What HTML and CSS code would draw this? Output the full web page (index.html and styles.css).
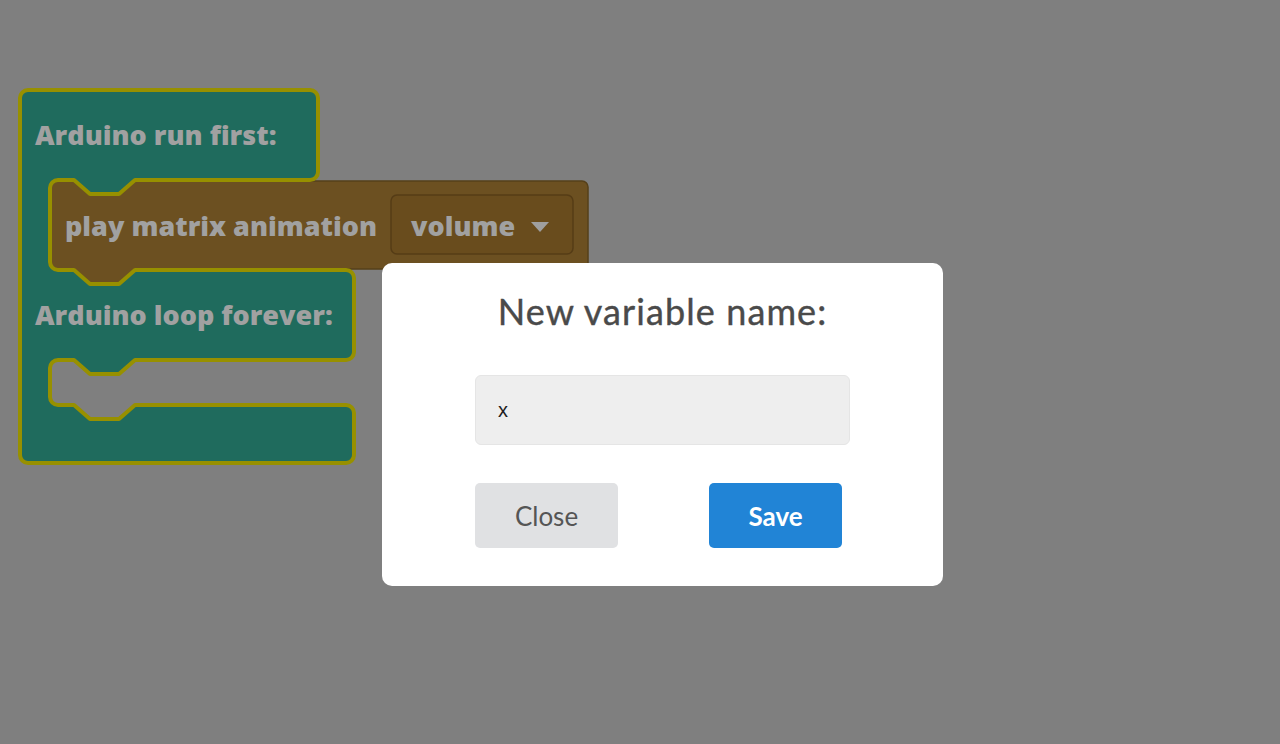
FILE: index.html
```html
<!DOCTYPE html>
<html lang="en">
<head>
<meta charset="utf-8">
<title>New variable</title>
<link rel="stylesheet" href="styles.css">
</head>
<body>
<div class="workspace">
  <svg class="blocks" width="1280" height="744" viewBox="0 0 1280 744" xmlns="http://www.w3.org/2000/svg">
    <path class="teal-fill" d="M 20,98 A 8,8 0 0 1 28,90 H 310 A 8,8 0 0 1 318,98 V 172 A 8,8 0 0 1 310,180 H 135 L 119,194 H 90 L 74,180 H 58 A 8,8 0 0 0 50,188 V 262 A 8,8 0 0 0 58,270 H 74 L 90,284 H 119 L 135,270 H 346 A 8,8 0 0 1 354,278 V 352 A 8,8 0 0 1 346,360 H 135 L 119,374 H 90 L 74,360 H 58 A 8,8 0 0 0 50,368 V 397 A 8,8 0 0 0 58,405 H 74 L 90,419 H 119 L 135,405 H 346 A 8,8 0 0 1 354,413 V 455 A 8,8 0 0 1 346,463 H 28 A 8,8 0 0 1 20,455 Z"/>
    <path class="brown" d="M 50,189 A 8,8 0 0 1 58,181 H 74 L 90,195 H 119 L 135,181 H 582 A 6,6 0 0 1 588,187 V 263 A 6,6 0 0 1 582,269 H 135 L 119,283 H 90 L 74,269 H 58 A 8,8 0 0 1 50,261 Z"/>
    <path class="teal-stroke" d="M 20,98 A 8,8 0 0 1 28,90 H 310 A 8,8 0 0 1 318,98 V 172 A 8,8 0 0 1 310,180 H 135 L 119,194 H 90 L 74,180 H 58 A 8,8 0 0 0 50,188 V 262 A 8,8 0 0 0 58,270 H 74 L 90,284 H 119 L 135,270 H 346 A 8,8 0 0 1 354,278 V 352 A 8,8 0 0 1 346,360 H 135 L 119,374 H 90 L 74,360 H 58 A 8,8 0 0 0 50,368 V 397 A 8,8 0 0 0 58,405 H 74 L 90,419 H 119 L 135,405 H 346 A 8,8 0 0 1 354,413 V 455 A 8,8 0 0 1 346,463 H 28 A 8,8 0 0 1 20,455 Z"/>
    <rect class="field" x="391" y="195" width="182" height="59" rx="6" ry="6"/>
    <polygon class="caret" points="531,222 549,222 540,232"/>
    <text class="label" x="35" y="145">Arduino run first:</text>
    <text class="label" x="65" y="236">play matrix animation</text>
    <text class="label" x="411" y="236">volume</text>
    <text class="label" x="35" y="325">Arduino loop forever:</text>
  </svg>
</div>

<div class="overlay">
  <div class="modal">
    <h2 class="modal-title">New variable name:</h2>
    <input class="name-input" type="text" value="x">
    <div class="actions">
      <button class="btn btn-close" type="button">Close</button>
      <button class="btn btn-save" type="button">Save</button>
    </div>
  </div>
</div>
</body>
</html>
```

FILE: styles.css
```css
html, body {
  margin: 0;
  padding: 0;
  width: 100%;
  height: 100%;
  overflow: hidden;
}

body {
  background: #7f7f7f;
  font-family: Lato, "Noto Sans", sans-serif;
}

.workspace {
  position: relative;
  width: 1280px;
  height: 744px;
  background: #7f7f7f;
}

.blocks {
  display: block;
}

.teal-fill {
  fill: #1f6b5d;
  stroke: none;
}

.teal-stroke {
  fill: none;
  stroke: #979000;
  stroke-width: 4;
  stroke-linejoin: round;
}

.brown {
  fill: #6c5021;
  stroke: #56401a;
  stroke-width: 1.5;
}

.field {
  fill: #694c1d;
  stroke: #553c16;
  stroke-width: 1.5;
}

.caret {
  fill: #9f9f9f;
}

.label {
  font-family: "Open Sans", Lato, sans-serif;
  font-weight: 800;
  font-size: 27px;
  fill: #a1a1a1;
}

.overlay {
  position: fixed;
  inset: 0;
  display: flex;
  justify-content: flex-start;
  align-items: flex-start;
  padding: 263px 0 0 382px;
  box-sizing: border-box;
}

.modal {
  width: 561px;
  height: 323px;
  background: #ffffff;
  border-radius: 10px;
  box-sizing: border-box;
  display: flex;
  flex-direction: column;
  align-items: center;
  padding-top: 27px;
}

.modal-title {
  margin: 0;
  font-family: Lato, "Noto Sans", sans-serif;
  font-weight: 400;
  font-size: 36px;
  line-height: 42px;
  color: #4a4a4a;
  letter-spacing: 1.1px;
  -webkit-text-stroke: 0.4px #4a4a4a;
}

.name-input {
  margin-top: 43px;
  width: 375px;
  height: 70px;
  box-sizing: border-box;
  border: 1px solid #e5e5e5;
  border-radius: 6px;
  background: #eeeeee;
  padding: 0 0 0 22px;
  font-family: "Liberation Sans", Arial, sans-serif;
  font-size: 20px;
  color: #1e1e1e;
  outline: none;
}

.actions {
  margin-top: 38px;
  width: 375px;
  display: flex;
  justify-content: space-between;
  padding-right: 8px;
  box-sizing: border-box;
}

.btn {
  height: 65px;
  border: none;
  border-radius: 5px;
  font-family: Lato, "Noto Sans", sans-serif;
  font-size: 26px;
  cursor: pointer;
}

.btn-close {
  width: 143px;
  background: #e0e1e3;
  color: #555555;
  font-weight: 400;
}

.btn-save {
  width: 133px;
  background: #2184d6;
  color: #ffffff;
  font-weight: 700;
}
```
